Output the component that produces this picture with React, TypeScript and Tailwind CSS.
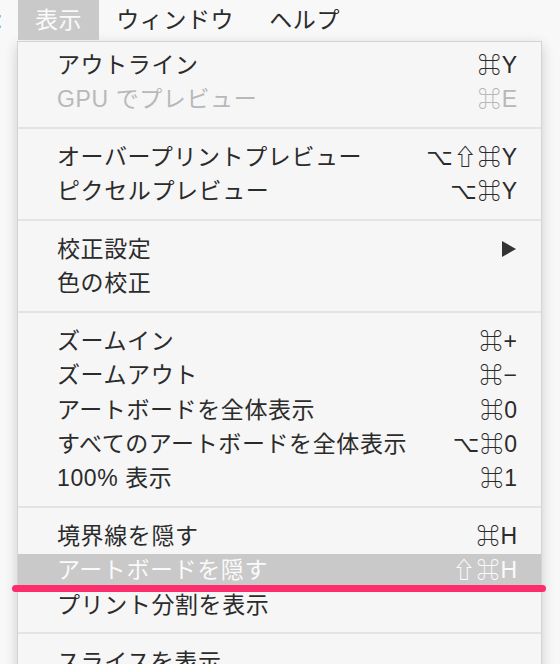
import React from "react";

type Item = { label: string; sc?: string; disabled?: boolean; sub?: boolean; hl?: boolean };

const groups: Item[][] = [
  [
    { label: "アウトライン", sc: "⌘Y" },
    { label: "GPU でプレビュー", sc: "⌘E", disabled: true },
  ],
  [
    { label: "オーバープリントプレビュー", sc: "⌥⇧⌘Y" },
    { label: "ピクセルプレビュー", sc: "⌥⌘Y" },
  ],
  [
    { label: "校正設定", sub: true },
    { label: "色の校正" },
  ],
  [
    { label: "ズームイン", sc: "⌘+" },
    { label: "ズームアウト", sc: "⌘−" },
    { label: "アートボードを全体表示", sc: "⌘0" },
    { label: "すべてのアートボードを全体表示", sc: "⌥⌘0" },
    { label: "100% 表示", sc: "⌘1" },
  ],
  [
    { label: "境界線を隠す", sc: "⌘H" },
    { label: "アートボードを隠す", sc: "⇧⌘H", hl: true },
    { label: "プリント分割を表示" },
  ],
  [
    { label: "スライスを表示" },
    { label: "スライスをロック" },
  ],
];

const font = {
  fontFamily: '"Liberation Sans", "Noto Sans CJK JP", "DejaVu Sans", sans-serif',
};

function Row({ item }: { item: Item }) {
  const color = item.hl
    ? "text-[#fafafa] bg-[#c9c9c9]"
    : item.disabled
    ? "text-[#b8b8b8]"
    : "text-[#2b2b2b]";
  return (
    <div
      className={`h-[34.3px] flex items-center justify-between pl-[39px] pr-[23px] text-[23px] leading-none ${color}`}
    >
      <span className="tracking-[0.6px]">{item.label}</span>
      {item.sc && <span className="tracking-[1px] font-medium">{item.sc}</span>}
      {item.sub && (
        <svg width="16" height="18" viewBox="0 0 16 18" className="mr-[1px]">
          <path d="M1 1 L15 9 L1 17 Z" fill="#333" />
        </svg>
      )}
    </div>
  );
}

export default function App() {
  return (
    <div
      className="relative w-[560px] h-[664px] overflow-hidden bg-[#f8f8f8]"
      style={font}
    >
      <div className="h-[40px] flex items-stretch text-[23px] leading-none text-[#2b2b2b]">
        <span className="w-[22px] flex items-center text-[#555] -ml-[4px]">:</span>
        <div className="flex items-center px-[17px] bg-[#c9c9c9] text-[#fafafa] tracking-[0.6px]">表示</div>
        <div className="flex items-center pl-[17px] pr-[19px] tracking-[0.6px]">ウィンドウ</div>
        <div className="flex items-center pl-[16px] tracking-[0.6px]">ヘルプ</div>
      </div>
      <div className="ml-[17px] mt-[1px] w-[525px] border border-[#d4d4d4] bg-[#f6f6f6] shadow-[0_4px_12px_rgba(0,0,0,0.18)] pt-[6px]">
        {groups.map((g, gi) => (
          <div key={gi}>
            {gi > 0 && <div className="h-[2px] mt-[10px] mb-[11.5px] bg-[#e4e4e4]" />}
            {g.map((it, i) => (
              <Row key={i} item={it} />
            ))}
          </div>
        ))}
      </div>
      <div className="absolute left-[12px] top-[585px] w-[534px] h-[7px] rounded-full bg-[#fd2c6c]" />
    </div>
  );
}
